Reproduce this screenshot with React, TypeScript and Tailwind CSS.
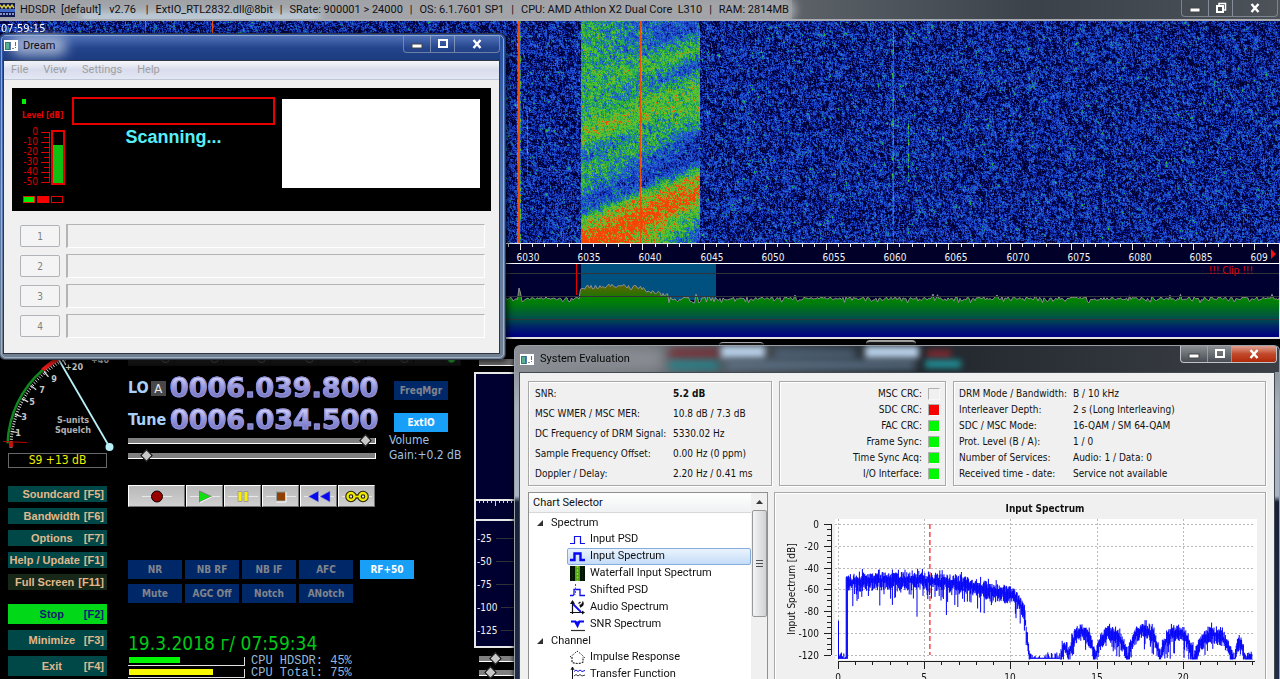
import { useLayoutEffect, useRef, type ReactNode } from 'react';

const UI = "font-['Roboto','Noto_Sans',sans-serif]";
const TAHOMA = "font-['DejaVu_Sans_Condensed','DejaVu_Sans',sans-serif]";
const ARIAL = "font-['Liberation_Sans',Arial,sans-serif]";
const MONO = "font-['Liberation_Mono','Courier_New',monospace]";

function makeRandom(seed: number) {
  let s = seed >>> 0;
  return () => {
    s = (Math.imul(s, 1664525) + 1013904223) >>> 0;
    return s / 4294967296;
  };
}

type Stop = [number, number];

function lerpProfile(points: Stop[], v: number) {
  if (v <= points[0][0]) return points[0][1];
  for (let i = 1; i < points.length; i++) {
    if (v <= points[i][0]) {
      const [x0, y0] = points[i - 1];
      const [x1, y1] = points[i];
      return y0 + ((v - x0) / (x1 - x0)) * (y1 - y0);
    }
  }
  return points[points.length - 1][1];
}

/* ---------- Waterfall ---------- */

const PALETTE: [number, number, number, number][] = [
  [0, 0, 0, 44],
  [0.13, 2, 10, 88],
  [0.26, 20, 52, 184],
  [0.42, 34, 92, 214],
  [0.5, 30, 132, 150],
  [0.58, 36, 168, 70],
  [0.7, 84, 200, 44],
  [0.82, 160, 160, 36],
  [0.87, 240, 76, 8],
  [1.4, 255, 50, 0],
];

function paletteColor(level: number): [number, number, number] {
  const l = Math.max(0, Math.min(1.39, level));
  for (let i = 1; i < PALETTE.length; i++) {
    if (l <= PALETTE[i][0]) {
      const a = PALETTE[i - 1];
      const b = PALETTE[i];
      const t = (l - a[0]) / (b[0] - a[0]);
      return [a[1] + (b[1] - a[1]) * t, a[2] + (b[2] - a[2]) * t, a[3] + (b[3] - a[3]) * t];
    }
  }
  return [255, 50, 0];
}

const LEFT_FADE: Stop[] = [
  [0, 0.6], [105, 0.6], [118, 0.62], [130, 0.7], [142, 0.68], [150, 0.5], [160, 0.4],
  [170, 0.6], [188, 0.54], [200, 0.36], [212, 0.4], [219, 0.64], [230, 0.78], [243, 0.97], [270, 1], [290, 0.9],
];
const RIGHT_FADE: Stop[] = [
  [0, 0.3], [72, 0.28], [80, 0.5], [95, 0.66], [102, 0.48], [112, 0.34], [124, 0.58], [142, 0.7],
  [162, 0.64], [174, 0.46], [186, 0.26], [206, 0.28], [215, 0.58], [224, 0.86], [244, 0.9], [254, 0.68],
  [268, 0.54], [284, 0.34],
];

function Waterfall() {
  const ref = useRef<HTMLCanvasElement>(null);
  useLayoutEffect(() => {
    const canvas = ref.current;
    const ctx = canvas?.getContext('2d');
    if (!canvas || !ctx) return;
    const { width, height } = canvas;
    const image = ctx.createImageData(width, height);
    const rnd = makeRandom(2832);
    const previous = new Float32Array(width);
    for (let y = 0; y < height; y++) {
      const ay = y + 21;
      let left = 0;
      for (let x = 0; x < width; x++) {
        const fresh = (rnd() + rnd() + rnd() - 1.5) * 0.32;
        const noise = fresh * 0.74 + previous[x] * 0.36 + left * 0.26;
        previous[x] = noise;
        left = noise;
        let level = 0.21 + noise;
        if (x >= 581 && x <= 699) {
          const t = (x - 581) / 118;
          const v = ay + t * 47;
          level = lerpProfile(LEFT_FADE, v) * (1 - t) + lerpProfile(RIGHT_FADE, v) * t + noise * 0.72;
        }
        if (x === 518 || x === 519) level = 0.88;
        if (x === 517 || x === 520) level = 0.5 + noise;
        if (x === 640) level = 0.88;
        if (x === 641) level += 0.14;
        if (x === 212) level = 0.88;
        if (x === 145 || x === 893) level = 0.47 + noise * 0.8;
        if (x === 892) level += 0.12;
        if (x === 908 && ay > 122 && ay < 182) level = 0.5 + noise;
        if (x === 527 && ay > 110 && ay < 180) level = 0.44 + noise;
        const [r, g, b] = paletteColor(level);
        const i = (y * width + x) * 4;
        image.data[i] = r;
        image.data[i + 1] = g;
        image.data[i + 2] = b;
        image.data[i + 3] = 255;
      }
    }
    ctx.putImageData(image, 0, 0);
  }, []);
  return <canvas ref={ref} width={1280} height={222} className="block h-[222px] w-full" />;
}

/* ---------- Frequency ruler and RF spectrum ---------- */

const TICK = 12.24;

function FrequencyRuler() {
  const ticks = Array.from({ length: 240 }, (_, i) => i - 42);
  return (
    <div className="flex h-[21px] border-y border-[#e8e8e8] border-b-white bg-[#000028]">
      <svg className="h-full min-w-0 flex-1 overflow-hidden" aria-label="Frequency scale, kHz">
        {ticks.map((i) => (
          <rect key={i} x={Math.round(520 + i * TICK)} y={0} width={1} height={i % 5 === 0 ? 6 : 3} fill="#e8e8e8" />
        ))}
        {ticks
          .filter((i) => i % 5 === 0)
          .map((i) => (
            <text
              key={i}
              x={Math.round(528 + i * TICK)}
              y={17}
              textAnchor="middle"
              fill="#f0f0f0"
              className={`${TAHOMA} text-[10px]`}
            >
              {6030 + i}
            </text>
          ))}
      </svg>
      <button type="button" aria-label="Scroll right" className="flex w-3 items-center justify-center border-r border-white bg-[#000028]">
        <svg width="6" height="10" viewBox="0 0 6 10"><path d="M0 0l5 5-5 5z" fill="#f01010" /></svg>
      </button>
    </div>
  );
}

function buildRfTrace() {
  const rnd = makeRandom(77);
  let d = '';
  for (let x = 0; x < 2000; x += 1.5) {
    let y = 34.5 + (rnd() - 0.5) * 3 + (rnd() > 0.86 ? 3 : 0) - (rnd() > 0.97 ? 3 : 0);
    if (x >= 580 && x < 668) {
      const hump = x < 584 ? 27 : x < 640 ? 24 - Math.sin(((x - 584) / 56) * Math.PI) * 1.5 : 24 + ((x - 640) / 28) * 8;
      y = hump + (rnd() - 0.5) * 5;
    }
    if (Math.abs(x - 519) < 1) y = 24;
    if (Math.abs(x - 521) < 1) y = 29;
    d += `${x === 0 ? 'M' : 'L'}${x} ${y.toFixed(1)}`;
  }
  return d;
}

const RF_TRACE = buildRfTrace();

function RfSpectrum() {
  return (
    <div className="relative h-[75px] border-b-2 border-r border-[#e0e0e0] bg-[#000030]">
      <svg className="block h-full w-full overflow-hidden" aria-label="RF spectrum">
        <defs>
          <linearGradient id="rfFill" gradientUnits="userSpaceOnUse" x1="0" y1="20" x2="0" y2="72">
            <stop offset="0" stopColor="#6a6000" />
            <stop offset="0.22" stopColor="#247400" />
            <stop offset="0.28" stopColor="#008400" />
            <stop offset="0.4" stopColor="#007810" />
            <stop offset="0.66" stopColor="#00504a" />
            <stop offset="0.82" stopColor="#002468" />
            <stop offset="1" stopColor="#000080" />
          </linearGradient>
        </defs>
        <rect x="581" y="0" width="135" height="36" fill="#005080" />
        <path d={`${RF_TRACE}L2000 76L0 76Z`} fill="url(#rfFill)" />
        <path d={RF_TRACE} fill="none" stroke="#909090" strokeWidth="1" />
        <g fill="#303438">
          <rect x="0" y="9" width="2000" height="1" />
          <rect x="0" y="32" width="2000" height="1" />
          <rect x="0" y="55" width="2000" height="1" />
        </g>
        <rect x="576" y="0" width="1" height="31" fill="#e00000" />
      </svg>
      <span className={`absolute right-[26px] top-0 text-[10px] leading-[13px] text-[#e80000] ${TAHOMA}`}>!!! Clip !!!</span>
    </div>
  );
}

/* ---------- Window chrome ---------- */

function AppIcon() {
  return (
    <svg width="14" height="11" viewBox="0 0 14 11" className="shrink-0">
      <rect width="14" height="11" fill="#fff" />
      <rect x="1" y="2" width="6" height="8" fill="#2c8068" />
      <rect x="2" y="3" width="3" height="6" fill="#58b090" />
      <rect x="6" y="2" width="1" height="8" fill="#5878b8" />
      <rect x="8" y="8" width="2" height="1" fill="#888" />
      <rect x="11" y="2" width="1" height="4" fill="#388868" />
      <rect x="11" y="7" width="1" height="1" fill="#388868" />
    </svg>
  );
}

function CaptionButtons({ restore = false, red = false }: { restore?: boolean; red?: boolean }) {
  const line = red ? 'border-[#c0c4c8] bg-gradient-to-b from-[#8c9094] to-[#484e54]' : 'border-[#a0a8b8]/60';
  const base = 'flex h-full items-center justify-center';
  return (
    <div className={`flex h-[17px] overflow-hidden rounded-b-[4px] border border-t-0 ${line}`}>
      <button type="button" aria-label="Minimize" className={`${base} w-[26px]`}>
        <svg width="12" height="12" viewBox="0 0 12 12"><rect x="1" y="6" width="10" height="4" fill="#fff" stroke="#444" /></svg>
      </button>
      <button type="button" aria-label={restore ? 'Restore' : 'Maximize'} className={`${base} w-[25px] border-x border-[#b0b8c8]/60`}>
        {restore ? (
          <svg width="12" height="12" viewBox="0 0 12 12" fill="none" stroke="#fff" strokeWidth="1.5">
            <path d="M4 3V1.5h6.5V8H9" />
            <rect x="2" y="4" width="6" height="6" strokeWidth="2" />
          </svg>
        ) : (
          <svg width="12" height="12" viewBox="0 0 12 12" fill="none">
            <rect x="2" y="2" width="8" height="7" stroke="#fff" strokeWidth="2" />
          </svg>
        )}
      </button>
      <button
        type="button"
        aria-label="Close"
        className={`${base} w-[44px] ${red ? 'bg-gradient-to-b from-[#e0a090] via-[#c04828] to-[#b02808]' : ''}`}
      >
        <svg width="12" height="12" viewBox="0 0 12 12"><path d="M2.5 2l7 8M9.500 2l-7 8" stroke="#fff" strokeWidth="2.4" /></svg>
      </button>
    </div>
  );
}

function MainTitleBar() {
  const facts = [
    'ExtIO_RTL2832.dll@8bit',
    'SRate: 900001 > 24000',
    'OS: 6.1.7601 SP1',
    'CPU: AMD Athlon X2 Dual Core  L310',
    'RAM: 2814MB',
  ];
  return (
    <header className="relative flex h-[21px] items-start overflow-hidden border-b-2 border-[#a8acb0] bg-gradient-to-r from-[#8c9094] via-[#9a9ca0] to-[#40464e]">
      <div className="absolute inset-y-0 left-[792px] right-0 bg-gradient-to-r from-[#5c6268] via-[#3c424a] to-[#4c5258]" />
      <div className="absolute -left-2 -top-1 h-7 w-[804px] rounded-full bg-[#a2a4a8] blur-[4px]" />
      <div className="absolute left-[80px] top-[13px] h-2 w-[240px] rounded-full bg-[#c8dcec] blur-[4px]" />
      <svg width="16" height="19" viewBox="0 0 16 19" className="relative shrink-0">
        <rect y="3" width="15" height="14" fill="#101850" />
        <rect y="9" width="15" height="3" fill="#4068c8" />
        <path d="M0 5l2 3 2-3 2 3 2-3 2 3 2-3 2 3" stroke="#d8c840" strokeWidth="1.500" fill="none" />
        <path d="M0 14h15" stroke="#8898c8" strokeWidth="2" strokeDasharray="2 1" />
      </svg>
      <h1 className={`relative flex flex-1 gap-[7px] whitespace-pre pl-1 text-[11px] leading-[20px] text-[#101014] ${UI}`}>
        <span>{'HDSDR  [default]   v2.76 '}</span>
        {facts.map((fact) => (
          <span key={fact} className="flex gap-[7px]">
            <span>|</span>
            <span>{fact}</span>
          </span>
        ))}
      </h1>
      <div className="relative pr-[2px]">
        <CaptionButtons restore />
      </div>
    </header>
  );
}

/* ---------- Receiver panel ---------- */

function polar(deg: number, r: number) {
  const a = (deg * Math.PI) / 180;
  return `${(109.5 - r * Math.cos(a)).toFixed(1)} ${(108 - r * Math.sin(a)).toFixed(1)}`;
}

function SMeter() {
  const ticks = Array.from({ length: 48 }, (_, i) => i * 1.5);
  const labels: [string, number, number][] = [
    ['1', 18, 97], ['3', 24, 81], ['5', 32, 66], ['7', 42, 54], ['9', 54, 43], ['+20', 74, 31], ['+40', 100, 24],
  ];
  return (
    <svg className="h-[112px] w-[120px]" viewBox="0 0 120 112" aria-label="Signal meter">
      <path d={`M${polar(2, 102)}A102 102 0 0 1 ${polar(49, 102)}`} fill="none" stroke="#108820" strokeWidth="2.500" />
      <path d={`M${polar(49, 102)}A102 102 0 0 1 ${polar(72, 102)}`} fill="none" stroke="#e81818" strokeWidth="4" />
      {ticks.map((a) => (
        <path key={a} d={`M${polar(a, 100)}L${polar(a, 97)}`} stroke="#d8d8d8" strokeWidth="1" />
      ))}
      {[9, 19, 29, 38, 49, 62].map((a) => (
        <path key={a} d={`M${polar(a, 100)}L${polar(a, 93)}`} stroke="#e0e0e0" strokeWidth="1.200" />
      ))}
      {labels.map(([t, x, y]) => (
        <text key={t} x={x} y={y} textAnchor="middle" fill="#c8c8c8" className={`${TAHOMA} text-[9px] font-bold`}>{t}</text>
      ))}
      <g fill="#b0b0b0" className={`${TAHOMA} text-[9px] font-bold`} textAnchor="middle">
        <text x="73" y="84">S-units</text>
        <text x="73" y="94">Squelch</text>
      </g>
      <path d="M3 102.500L27 103.500" stroke="#c00000" />
      <rect x="9" y="103" width="4" height="5" fill="#c01010" />
      <path d="M59 21L109.500 108" stroke="#b8f0f8" strokeWidth="1.800" />
      <circle cx="109.500" cy="108" r="4" fill="#b8f0f8" />
    </svg>
  );
}

function MenuButton({ label, hint, kind = 'small' }: { label: string; hint: string; kind?: 'small' | 'dark' | 'stop' | 'tall' }) {
  const look = {
    small: 'h-4 bg-[#004848] text-[#e0b88c]',
    dark: 'h-4 bg-[#182818] text-[#e0b88c]',
    stop: 'h-5 bg-[#00d818] text-[#101870]',
    tall: 'h-5 bg-[#004848] text-[#e0b88c]',
  }[kind];
  return (
    <button type="button" className={`flex w-[99px] items-center justify-end gap-1 whitespace-nowrap pr-[3px] text-[11px] leading-4 font-bold ${ARIAL} ${look}`}>
      <span className="min-w-[56px] text-center">{label}</span>
      <span className="min-w-[19px] text-right">{hint}</span>
    </button>
  );
}

function LevelSlider({ label, value, className }: { label: string; value: number; className: string }) {
  return (
    <input
      type="range"
      aria-label={label}
      defaultValue={value}
      className={`h-[6px] min-w-0 appearance-none border-b border-r border-white bg-[#808080] [&::-webkit-slider-thumb]:h-[9px] [&::-webkit-slider-thumb]:w-[9px] [&::-webkit-slider-thumb]:rotate-45 [&::-webkit-slider-thumb]:appearance-none [&::-webkit-slider-thumb]:border [&::-webkit-slider-thumb]:border-black [&::-webkit-slider-thumb]:bg-[#c8c8c8] ${className}`}
    />
  );
}

function Frequency({ value }: { value: string }) {
  return (
    <output className="bg-gradient-to-b from-[#d8d8ff] via-[#9494dc] to-[#6c6cb8] bg-clip-text font-['DejaVu_Sans',sans-serif] text-[27px] leading-[24px] font-bold text-transparent [-webkit-text-stroke:1px_#9090d4]">
      {value}
    </output>
  );
}

function PanelButton({ children, on = false }: { children: ReactNode; on?: boolean }) {
  return (
    <button
      type="button"
      className={`h-[19px] w-[54px] whitespace-nowrap text-[10px] font-bold ${TAHOMA} ${on ? 'bg-[#18a0f8] text-white' : 'bg-[#002868] text-[#80848c]'}`}
    >
      {children}
    </button>
  );
}

function TransportButton({ label, wide = false, children }: { label: string; wide?: boolean; children: ReactNode }) {
  return (
    <button
      type="button"
      aria-label={label}
      className={`flex h-[22px] items-center justify-center border border-[#707070] border-l-white border-t-white bg-gradient-to-b from-[#b8b8b8] to-[#d0d0d0] ${wide ? 'w-[57px]' : 'w-[37px]'}`}
    >
      <svg width="30" height="18" viewBox="0 0 30 18">
        <path d="M0 9.500H30" stroke="#e8e8e8" />
        {children}
      </svg>
    </button>
  );
}

function CpuBar({ label, value, color, width }: { label: string; value: number; color: string; width: number }) {
  return (
    <div className="flex h-3 items-center gap-[6px]">
      <div className="h-[9px] w-[117px] border-b border-r border-[#e0e0e0] pb-px pl-px">
        <div className={`h-[6px] ${color}`} style={{ width }} />
      </div>
      <span className={`whitespace-pre text-[12px] leading-3 text-[#98b8d8] ${MONO}`}>{`${label} ${value}%`}</span>
    </div>
  );
}

function ModeBar() {
  return (
    <div className="flex h-[27px] w-[333px]">
      {['AM', 'ECSS', 'FM', 'LSB', 'USB', 'CW', 'DRM'].map((mode) => (
        <button
          key={mode}
          type="button"
          className={`flex flex-1 items-end justify-between border-r border-[#101010] bg-gradient-to-b from-[#505050] via-[#404040] to-[#0c0c0c] px-1 pb-[3px] text-[12px] leading-[14px] font-bold ${TAHOMA} ${mode === 'DRM' ? 'text-[#c8c820]' : 'text-[#303030]'}`}
        >
          {mode}
          <span className={`h-[9px] w-[9px] rounded-full border ${mode === 'DRM' ? 'border-[#106020] bg-[#30c040]' : 'border-[#484848]'}`} />
        </button>
      ))}
    </div>
  );
}

function ReceiverPanel() {
  return (
    <main className="flex min-h-0 flex-1 bg-black">
      <div className="w-[128px] shrink-0">
        <SMeter />
        <div className="flex flex-col gap-[6px] pl-2">
          <output className={`mb-3 mt-[2px] flex h-[15px] w-[99px] items-center justify-center border border-[#686868] text-[12px] leading-[13px] text-[#f0f000] ${TAHOMA}`}>
            S9 +13 dB
          </output>
          <MenuButton label="Soundcard" hint="[F5]" />
          <MenuButton label="Bandwidth" hint="[F6]" />
          <MenuButton label="Options" hint="[F7]" />
          <MenuButton label="Help / Update" hint="[F1]" />
          <MenuButton label="Full Screen" hint="[F11]" kind="dark" />
          <div className="mt-2 flex flex-col gap-[6px]">
            <MenuButton label="Stop" hint="[F2]" kind="stop" />
            <MenuButton label="Minimize" hint="[F3]" kind="tall" />
            <MenuButton label="Exit" hint="[F4]" kind="tall" />
          </div>
        </div>
      </div>

      <div className="w-[346px] shrink-0">
        <ModeBar />
        <div className="mt-[10px] flex h-6 items-center">
          <span className={`text-[16px] font-bold text-[#a8d0f8] ${TAHOMA}`}>LO</span>
          <button type="button" className={`ml-[2px] mr-[4px] h-[15px] w-[15px] bg-[#484848] text-[13px] leading-[15px] text-[#e8e8e8] ${TAHOMA}`}>A</button>
          <Frequency value="0006.039.800" />
          <div className="ml-auto pr-[26px]"><PanelButton>FreqMgr</PanelButton></div>
        </div>
        <div className="mt-2 flex h-6 items-center">
          <span className={`w-[42px] text-[16px] font-bold text-[#a8d0f8] ${TAHOMA}`}>Tune</span>
          <Frequency value="0006.034.500" />
          <div className="ml-auto pr-[26px]"><PanelButton on>ExtIO</PanelButton></div>
        </div>
        <div className={`mt-px text-[12px] leading-[15px] text-[#a0c0e0] ${TAHOMA}`}>
          <div className="flex h-[15px] items-center gap-[13px]"><LevelSlider label="Volume" value={98} className="w-[248px]" />Volume</div>
          <div className="flex h-[15px] items-center gap-[13px]"><LevelSlider label="AGC gain" value={6} className="w-[248px]" />Gain:+0.2 dB</div>
        </div>
        <div className="mt-[22px] flex w-[250px] gap-px">
          <TransportButton label="Record" wide><circle cx="15" cy="9.500" r="5.500" fill="#980000" stroke="#100" /></TransportButton>
          <TransportButton label="Play"><path d="M9.500 4l12 5.500-12 5.500z" fill="#10e010" stroke="#808080" /><path d="M10 15.500l11.500-5.500" stroke="#fff" /></TransportButton>
          <TransportButton label="Pause"><path d="M10 4.500h4v10h-4zM16 4.500h4v10h-4z" fill="#f8f000" stroke="#a0a0a0" /></TransportButton>
          <TransportButton label="Stop playback"><rect x="10.500" y="5" width="9" height="9" fill="#904000" stroke="#90a0a0" /><path d="M10 15h10V5" stroke="#fff" fill="none" /></TransportButton>
          <TransportButton label="Rewind"><path d="M14.500 4v11l-10-5.500zM26 4v11l-10-5.500z" fill="#0808f0" stroke="#9098c0" strokeWidth="0.600" /></TransportButton>
          <TransportButton label="Loop">
            <g fill="none">
              <path d="M10 9.500h10" stroke="#000" strokeWidth="4" />
              <circle cx="9" cy="9.500" r="3.500" stroke="#202000" strokeWidth="4.500" />
              <circle cx="21" cy="9.500" r="3.500" stroke="#202000" strokeWidth="4.500" />
              <circle cx="9" cy="9.500" r="3.500" stroke="#f0e800" strokeWidth="2.400" />
              <circle cx="21" cy="9.500" r="3.500" stroke="#f0e800" strokeWidth="2.400" />
              <path d="M12 9.500h6" stroke="#f0e800" strokeWidth="1.800" />
            </g>
          </TransportButton>
        </div>
        <div className="mt-[53px] flex gap-[7px]">
          <div className="grid grid-cols-4 gap-x-[3px] gap-y-[5px]">
            <PanelButton>NR</PanelButton>
            <PanelButton>NB RF</PanelButton>
            <PanelButton>NB IF</PanelButton>
            <PanelButton>AFC</PanelButton>
            <PanelButton>Mute</PanelButton>
            <PanelButton>AGC Off</PanelButton>
            <PanelButton>Notch</PanelButton>
            <PanelButton>ANotch</PanelButton>
          </div>
          <PanelButton on>RF+50</PanelButton>
        </div>
        <time className={`mt-7 block whitespace-nowrap text-[19px] leading-6 text-[#00c818] ${TAHOMA}`}>19.3.2018 г/ 07:59:34</time>
        <CpuBar label="CPU HDSDR:" value={45} color="bg-[#00f800]" width={51} />
        <CpuBar label="CPU Total:" value={75} color="bg-[#f8f800]" width={84} />
      </div>

      <div className="min-w-0 flex-1">
        <div className="flex h-[33px] items-start">
          <div className="ml-[5px] mt-[20px] h-[7px] w-[37px] border-b border-white bg-[#707070]" />
          <div className="ml-[203px] mt-[3px] h-4 w-[45px] rounded-sm border-t border-[#c8c8c8] bg-[#202020]" />
          <div className="ml-[102px] mt-px h-4 w-[50px] rounded-sm border-t-2 border-[#a8a8a8] bg-[#202020]" />
        </div>
        <div className="flex h-[276px] flex-col border-2 border-[#e8e8e8] bg-[#000030]">
          <div className="h-[127px] border-b-2 border-[#e8e8e8]" />
          <div className="h-5 border-b-2 border-[#e8e8e8]">
            <svg className="block h-2 w-full">
              {Array.from({ length: 60 }, (_, i) => (
                <rect key={i} x={3 + i * 4} y="0" width="1" height={i % 5 === 4 ? 5 : 2} fill="#d0d0d0" />
              ))}
            </svg>
          </div>
          <ul className={`flex flex-col pt-[6px] text-[10px] leading-[23px] text-[#f0f0f0] ${TAHOMA}`}>
            {['-25', '-50', '-75', '-100', '-125'].map((db) => (
              <li key={db} className="flex items-center gap-1 pl-px">
                {db}
                <span className="h-px flex-1 bg-[#303038]" />
              </li>
            ))}
          </ul>
        </div>
        <div className="flex flex-col gap-2 pl-[5px] pt-2">
          <LevelSlider label="AF zoom" value={44} className="w-[37px]" />
          <LevelSlider label="AF speed" value={26} className="w-[37px]" />
        </div>
      </div>
    </main>
  );
}

/* ---------- Dream window ---------- */

function DreamLevelMeter() {
  return (
    <div className="w-[60px] shrink-0 pl-[10px] pt-[11px]">
      <div className="h-[5px] w-1 bg-[#00f000]" />
      <div className={`mt-[5px] whitespace-nowrap text-[8px] leading-[14px] font-bold text-[#e80000] ${TAHOMA}`}>Level [dB]</div>
      <div className="mt-[4px] flex h-[62px]">
        <ul className={`w-4 text-right text-[10px] leading-[10px] text-[#d80000] ${TAHOMA}`}>
          {['0', '-10', '-20', '-30', '-40', '-50'].map((v) => (
            <li key={v}>{v}</li>
          ))}
        </ul>
        <svg width="30" height="62" viewBox="0 0 30 62">
          <g fill="#e00000">
            <rect x="11" y="5" width="1" height="51" />
            {Array.from({ length: 11 }, (_, i) => (
              <rect key={i} x={i % 2 ? 6 : 3} y={5 + i * 5} width={i % 2 ? 5 : 8} height="1" />
            ))}
          </g>
          <rect x="14" y="4" width="12" height="53" fill="#000" stroke="#e80000" strokeWidth="2" />
          <rect x="15" y="18" width="10" height="38" fill="#10c010" />
        </svg>
      </div>
      <div className="mt-[7px] flex h-[7px] gap-[2px] pl-px">
        <span className="w-3 border border-[#e02000] bg-[#00f000]" />
        <span className="w-3 bg-[#f80000]" />
        <span className="w-3 border border-[#e00000]" />
      </div>
    </div>
  );
}

function DreamWindow() {
  return (
    <section className={`absolute -left-px top-[33px] w-[507px] rounded-[6px] border border-[#303848] bg-gradient-to-b from-[#2850a0] via-[#5878b0] to-[#708090] p-px text-[11px] shadow-[2px_2px_6px_#000a] ${UI}`}>
      <div className="rounded-[5px] border border-[#b8c8e0]/70 pb-[3px] pl-px pr-[3px]">
        <header className="relative flex h-[24px] items-start bg-gradient-to-b from-[#5070b8] via-[#24448c] to-[#1c3c80] pl-px">
          <span className="absolute left-2 top-0 h-5 w-14 rounded-full bg-[#b8c4dc]/80 blur-[6px]" />
          <div className="relative flex flex-1 items-center gap-[5px] pt-[1px]">
            <AppIcon />
            <h2 className="text-[11px] leading-[17px] text-[#0c0c18]">Dream</h2>
          </div>
          <CaptionButtons />
        </header>
        <div className="border border-[#303848] bg-[#f0f0f0] pb-[15px]">
          <nav className="flex h-[19px] items-center gap-[15px] border-b border-[#c0c8d8] bg-gradient-to-b from-[#f8f8fc] via-[#d8dcec] to-[#e4e8f4] pl-[7px] text-[#a0a0a0]">
            {['File', 'View', 'Settings', 'Help'].map((m) => (
              <button key={m} type="button">{m}</button>
            ))}
          </nav>
          <div className="mx-[8px] mt-[8px] flex h-[123px] bg-black">
            <DreamLevelMeter />
            <div className="flex-1 pt-[9px]">
              <div className="h-[28px] border-2 border-[#e80000]" />
              <p className={`text-center text-[18px] leading-6 font-bold text-[#58f0f8] ${ARIAL}`}>Scanning...</p>
            </div>
            <div className="ml-[7px] mr-[11px] mt-[11px] h-[89px] w-[198px] bg-white" />
          </div>
          <ol className="mt-[13px] flex flex-col gap-[6px] pl-4 pr-[14px]">
            {[1, 2, 3, 4].map((n) => (
              <li key={n} className="flex h-6 items-center gap-[6px]">
                <button type="button" className={`h-[22px] w-[40px] rounded-[2px] border border-[#b0b4b8] bg-[#f4f4f4] text-[10px] text-[#808080] ${TAHOMA}`}>{n}</button>
                <div className="h-full flex-1 border border-l-2 border-[#b4b4b4] border-b-white border-r-white" />
              </li>
            ))}
          </ol>
        </div>
      </div>
    </section>
  );
}

/* ---------- System Evaluation window ---------- */

function InfoBox({ className, children }: { className: string; children: ReactNode }) {
  return <div className={`border border-[#a8a8a8] shadow-[1px_1px_0_#fff,inset_1px_1px_0_#fff] ${className}`}>{children}</div>;
}

const SNR_ROWS: [string, string][] = [
  ['SNR:', '5.2 dB'],
  ['MSC WMER / MSC MER:', '10.8 dB / 7.3 dB'],
  ['DC Frequency of DRM Signal:', '5330.02 Hz'],
  ['Sample Frequency Offset:', '0.00 Hz (0 ppm)'],
  ['Doppler / Delay:', '2.20 Hz / 0.41 ms'],
];

const CRC_ROWS: [string, string][] = [
  ['MSC CRC:', 'bg-[#f0f0f0]'],
  ['SDC CRC:', 'bg-[#f80000]'],
  ['FAC CRC:', 'bg-[#00f800]'],
  ['Frame Sync:', 'bg-[#00f800]'],
  ['Time Sync Acq:', 'bg-[#00f800]'],
  ['I/O Interface:', 'bg-[#00f800]'],
];

const DRM_ROWS: [string, string][] = [
  ['DRM Mode / Bandwidth:', 'B / 10 kHz'],
  ['Interleaver Depth:', '2 s (Long Interleaving)'],
  ['SDC / MSC Mode:', '16-QAM / SM 64-QAM'],
  ['Prot. Level (B / A):', '1 / 0'],
  ['Number of Services:', 'Audio: 1 / Data: 0'],
  ['Received time - date:', 'Service not available'],
];

const TREE_ICONS: Record<string, ReactNode> = {
  psd: <path d="M0 11.500h4.500v-7h6v7H15" fill="none" stroke="#1010e8" strokeWidth="1.200" />,
  spectrum: <path d="M0 11h4.500V4.500h6V11H15" fill="none" stroke="#0808f0" strokeWidth="2.400" />,
  waterfall: (
    <>
      <rect width="15" height="15" fill="#041404" />
      <rect x="5" width="5" height="15" fill="#48a818" />
      <path d="M7.500 0v15" stroke="#c8c820" strokeWidth="1.500" strokeDasharray="2 1.500" />
      <path d="M2.500 0v15M12.500 0v15" stroke="#0c300c" strokeDasharray="1 1" />
    </>
  ),
  shifted: (
    <>
      <path d="M0 12.500h3l1-1V6.500h6v6h5" fill="none" stroke="#1010e8" strokeWidth="1.300" />
      <path d="M5.500 1v11" stroke="#f02020" strokeDasharray="2 1.500" />
    </>
  ),
  audio: (
    <>
      <path d="M2.500 14V1M0 12.500h14" stroke="#101010" strokeWidth="1.200" />
      <path d="M2.500 0L0 4h5zM15 12.500l-3-2v4z" fill="#101010" />
      <path d="M3 4l8 8" stroke="#1010e8" strokeWidth="1.800" fill="none" />
      <path d="M8.500 3.500l2-1.500M10 7c3-1 4-3 2.500-5.500M9.500 5.500c2 0 3-1 3-2.500" stroke="#101010" strokeWidth="1.400" fill="none" />
    </>
  ),
  snr: (
    <>
      <path d="M1 4.500h4l2.500 4.500 2-4.500h4.500M5 4c1 2 3 2 5 0" stroke="#0808f0" strokeWidth="2" fill="none" />
      <path d="M1 13.500h14" stroke="#303030" strokeWidth="1.200" />
    </>
  ),
  impulse: (
    <>
      <path d="M0 7l4-3 3-3 4 3 4 4" stroke="#101010" strokeDasharray="1.500 1.500" fill="none" />
      <path d="M2 7v5c2 2 9 2 11 0V7" stroke="#303030" strokeWidth="1.200" strokeDasharray="2 1" fill="none" />
    </>
  ),
  transfer: (
    <>
      <path d="M2.500 0v15M0 13.500h15M1 3l1.500-3L4 3" stroke="#101010" fill="none" />
      <path d="M4 4.500l2-1.500 2 1.500 2-1.500 2 1.500 3-1" stroke="#1010e8" fill="none" />
      <path d="M4 9l2-1.500L8 9l2-1.500L12 9l3-1" stroke="#404040" fill="none" />
    </>
  ),
};

function TreeItem({ icon, children, selected = false }: { icon: string; children: ReactNode; selected?: boolean }) {
  return (
    <li className="pl-[38px]">
      <button
        type="button"
        className={`flex h-[17px] w-full items-center gap-[5px] whitespace-nowrap rounded-[2px] border pl-[2px] text-left ${selected ? 'border-[#84acdd] bg-gradient-to-b from-[#eaf3fe] to-[#c4dcf8]' : 'border-transparent'}`}
      >
        <svg width="15" height="15" viewBox="0 0 15 15" className="shrink-0">{TREE_ICONS[icon]}</svg>
        {children}
      </button>
    </li>
  );
}

function TreeGroup({ label, children }: { label: string; children: ReactNode }) {
  return (
    <li>
      <div className="flex h-[16px] items-center gap-[8px] pl-[8px]">
        <svg width="6" height="6" viewBox="0 0 6 6"><path d="M6 0v6H0z" fill="#303030" /></svg>
        {label}
      </div>
      <ul>{children}</ul>
    </li>
  );
}

function ChartSelector() {
  return (
    <div className={`flex w-[240px] shrink-0 border border-[#909090] border-b-0 bg-white text-[11px] text-[#101010] ${UI}`}>
      <div className="min-w-0 flex-1">
        <h3 className="h-5 border-b border-[#d8d8d8] bg-gradient-to-b from-white to-[#f0f1f3] pl-1 leading-[20px]">Chart Selector</h3>
        <ul className="pt-[2px]">
          <TreeGroup label="Spectrum">
            <TreeItem icon="psd">Input PSD</TreeItem>
            <TreeItem icon="spectrum" selected>Input Spectrum</TreeItem>
            <TreeItem icon="waterfall">Waterfall Input Spectrum</TreeItem>
            <TreeItem icon="shifted">Shifted PSD</TreeItem>
            <TreeItem icon="audio">Audio Spectrum</TreeItem>
            <TreeItem icon="snr">SNR Spectrum</TreeItem>
          </TreeGroup>
          <TreeGroup label="Channel">
            <TreeItem icon="impulse">Impulse Response</TreeItem>
            <TreeItem icon="transfer">Transfer Function</TreeItem>
          </TreeGroup>
        </ul>
      </div>
      <div className="w-[16px] bg-[#f0f0f0]">
        <button type="button" aria-label="Scroll up" className="flex h-[17px] w-full items-center justify-center">
          <svg width="7" height="4" viewBox="0 0 7 4"><path d="M0 4l3.500-4L7 4z" fill="#383838" /></svg>
        </button>
        <div className="ml-px flex h-[107px] flex-col items-center justify-center gap-[2px] rounded-[2px] border border-[#989898] bg-gradient-to-r from-[#f4f4f4] to-[#d0d2d4]">
          <span className="h-px w-[7px] bg-[#505050]" />
          <span className="h-px w-[7px] bg-[#505050]" />
          <span className="h-px w-[7px] bg-[#505050]" />
        </div>
      </div>
    </div>
  );
}

const dbY = (db: number) => 5 - db * 1.0875;
const kHzX = (f: number) => 63 + f * 17.24;

function buildInputSpectrum() {
  const rnd = makeRandom(5330);
  const lobes: [number, number, number][] = [
    [12.9, 13.4, -106], [13.3, 14.95, -92], [14.85, 16.85, -93], [16.75, 18.75, -90],
    [18.65, 20.7, -92], [20.6, 22.95, -94], [23, 23.55, -101], [23.6, 24.05, -118],
  ];
  let d = `M${kHzX(0) + 0.5} ${dbY(-89)}V${dbY(-124)}`;
  for (let x = kHzX(0) + 1; x < kHzX(24.05); x += 0.6) {
    const f = (x - 63) / 17.24;
    let top = -123 + (rnd() > 0.6 ? rnd() * 5 : 0);
    let bottom = -124;
    if (f > 0.45 && f < 11.15) {
      const curve = f < 7 ? -48 + Math.sin((f / 7) * Math.PI) * 3 : f < 10.2 ? -48 - ((f - 7) / 3.2) * 11 : f < 10.8 ? -59 - ((f - 10.2) / 0.6) * 14 : -73 - ((f - 10.8) / 0.35) * 50;
      top = curve + 1 - rnd() * 6 + (rnd() > 0.88 ? 4 : 0);
      bottom = curve - 8 - rnd() * 8 - (rnd() > 0.68 ? rnd() * rnd() * 24 : 0) - (rnd() > 0.975 ? 14 : 0);
      if (f < 0.55) bottom = -124;
    } else {
      for (const [a, b, peak] of lobes) {
        if (f > a && f < b) {
          const u = ((f - a) / (b - a)) * 2 - 1;
          const curve = peak - Math.pow(Math.abs(u), 2.4) * (119 + peak);
          if (curve > top || top < -118) {
            top = curve - rnd() * 6 + (rnd() > 0.88 ? 4 : 0);
            bottom = curve - 9 - rnd() * 7 - (rnd() > 0.75 ? rnd() * 16 : 0);
          }
        }
      }
    }
    d += `M${x.toFixed(1)} ${dbY(top).toFixed(1)}V${dbY(Math.max(-124.5, Math.min(bottom, top - 1))).toFixed(1)}`;
  }
  return d;
}

const INPUT_SPECTRUM = buildInputSpectrum();

function InputSpectrumPlot() {
  const dbTicks = [0, -20, -40, -60, -80, -100, -120];
  const kHz = [0, 5, 10, 15, 20];
  return (
    <svg className="block h-[200px] w-full overflow-hidden" aria-label="Input spectrum chart">
      <rect x="60" y="0" width="422" height="141" fill="#fff" />
      <g stroke="#b8b8b8" strokeDasharray="2 2">
        {dbTicks.map((v) => (
          <path key={v} d={`M60 ${Math.round(dbY(v)) + 0.5}H480`} />
        ))}
        {kHz.map((v) => (
          <path key={v} d={`M${Math.round(kHzX(v)) + 0.5} 0V141`} />
        ))}
      </g>
      <path d={`M${kHzX(5.33)} 5V136`} stroke="#f84848" strokeWidth="1.500" strokeDasharray="5 3" />
      <path d={INPUT_SPECTRUM} stroke="#0000f8" strokeWidth="1" />
      <g fill="#202020">
        <rect x="56" y="5" width="1" height="131" />
        <rect x="63" y="142" width="417" height="1" />
        {Array.from({ length: 25 }, (_, i) => (
          <rect key={i} x={i % 4 === 0 ? 49 : 52} y={Math.round(dbY(-i * 5))} width={i % 4 === 0 ? 7 : 4} height="1" />
        ))}
        {Array.from({ length: 25 }, (_, i) => (
          <rect key={i} x={Math.round(kHzX(i))} y="142" width="1" height={i % 5 === 0 ? 8 : 4} />
        ))}
      </g>
      <g fill="#101010" className={`${TAHOMA} text-[10px]`}>
        {dbTicks.map((v) => (
          <text key={v} x="44" y={Math.round(dbY(v)) + 4} textAnchor="end">{v}</text>
        ))}
        {kHz.map((v) => (
          <text key={v} x={Math.round(kHzX(v))} y="162" textAnchor="middle">{v}</text>
        ))}
        <text transform="translate(20 70) rotate(-90)" textAnchor="middle">Input Spectrum [dB]</text>
      </g>
    </svg>
  );
}

function EvaluationWindow() {
  return (
    <section className="absolute bottom-0 left-[514px] right-0 top-[345px] flex flex-col overflow-hidden rounded-t-[6px] border border-b-0 border-[#9aa0a8] bg-[linear-gradient(to_bottom,#7c828a_0px,#a8b0bc_60px,#a8b4c4_150px,#182038_156px,#202c48_100%)] px-[4px] shadow-[0_0_5px_#000]">
      <header className="relative -mx-[4px] flex h-[26px] shrink-0 items-start overflow-hidden bg-gradient-to-r from-[#8c9096] via-[#20262c] to-[#3c4046] pl-[5px] pr-[2px]">
        <span className="absolute left-0 top-0 h-full w-[150px] bg-[#8a8e94] blur-[8px]" />
        <span className="absolute left-[154px] top-1 h-2 w-[50px] bg-[#802830] blur-[4px]" />
        <span className="absolute left-[154px] top-[15px] h-2 w-[50px] bg-[#208890] blur-[4px]" />
        <span className="absolute left-[206px] top-0 h-3 w-[44px] bg-[#b8d0e8] blur-[3px]" />
        <span className="absolute left-[210px] top-[15px] h-2 w-[190px] bg-[#607890] blur-[4px]" />
        <span className="absolute left-[260px] top-1 h-2 w-[80px] bg-[#506880] blur-[4px]" />
        <span className="absolute left-[350px] top-0 h-3 w-[54px] bg-[#b8d0e8] blur-[3px]" />
        <span className="absolute left-[412px] top-1 h-2 w-[24px] bg-[#802830] blur-[3px]" />
        <span className="absolute left-[410px] top-[14px] h-2 w-[36px] bg-[#209098] blur-[3px]" />
        <div className="relative flex flex-1 items-center gap-[6px] pt-1">
          <AppIcon />
          <h2 className={`text-[11px] leading-[18px] text-[#080808] ${UI}`}>System Evaluation</h2>
        </div>
        <div className="relative"><CaptionButtons red /></div>
      </header>
      <div className={`flex min-h-0 flex-1 flex-col border border-b-0 border-[#404850] bg-[#f0f0f0] pl-[8px] pr-[8px] pt-[8px] text-[10px] text-[#101010] ${TAHOMA}`}>
        <div className="flex h-[105px] shrink-0 gap-[7px] whitespace-nowrap">
          <InfoBox className="w-[244px] shrink-0">
            <dl className="grid grid-cols-[138px_1fr] pl-[6px] pt-[2px] leading-[20px]">
              {SNR_ROWS.map(([k, v], i) => (
                <div key={k} className="contents">
                  <dt>{k}</dt>
                  <dd className={i === 0 ? 'font-bold' : ''}>{v}</dd>
                </div>
              ))}
            </dl>
          </InfoBox>
          <InfoBox className="w-[167px] shrink-0">
            <dl className="grid grid-cols-[1fr_12px] gap-x-[6px] pr-[5px] pt-[4px] leading-4">
              {CRC_ROWS.map(([k, color]) => (
                <div key={k} className="contents">
                  <dt className="text-right">{k}</dt>
                  <dd className="flex items-center">
                    <span className={`h-3 w-3 border border-[#b0b0b0] border-b-[#f8f8f8] border-r-[#f8f8f8] ${color}`} />
                  </dd>
                </div>
              ))}
            </dl>
          </InfoBox>
          <InfoBox className="min-w-0 flex-1">
            <dl className="grid grid-cols-[114px_1fr] pl-[5px] pt-[4px] leading-4">
              {DRM_ROWS.map(([k, v]) => (
                <div key={k} className="contents">
                  <dt>{k}</dt>
                  <dd>{v}</dd>
                </div>
              ))}
            </dl>
          </InfoBox>
        </div>
        <div className="mt-[6px] flex min-h-0 flex-1 gap-[6px]">
          <ChartSelector />
          <div className="min-w-0 flex-1 border border-b-0 border-[#a8a8a8] shadow-[1px_0_0_#fff,inset_1px_1px_0_#fff]">
            <h3 className="h-[26px] pl-[50px] pt-[8px] text-center text-[10px] leading-[16px] font-bold">Input Spectrum</h3>
            <InputSpectrumPlot />
          </div>
        </div>
      </div>
    </section>
  );
}

export default function App() {
  return (
    <div className="relative flex h-screen flex-col overflow-hidden bg-black">
      <MainTitleBar />
      <div className="relative">
        <Waterfall />
        <time className={`absolute left-px top-[1px] text-[11px] leading-[14px] text-white ${TAHOMA}`}>07:59:15</time>
      </div>
      <FrequencyRuler />
      <RfSpectrum />
      <ReceiverPanel />
      <DreamWindow />
      <EvaluationWindow />
    </div>
  );
}
